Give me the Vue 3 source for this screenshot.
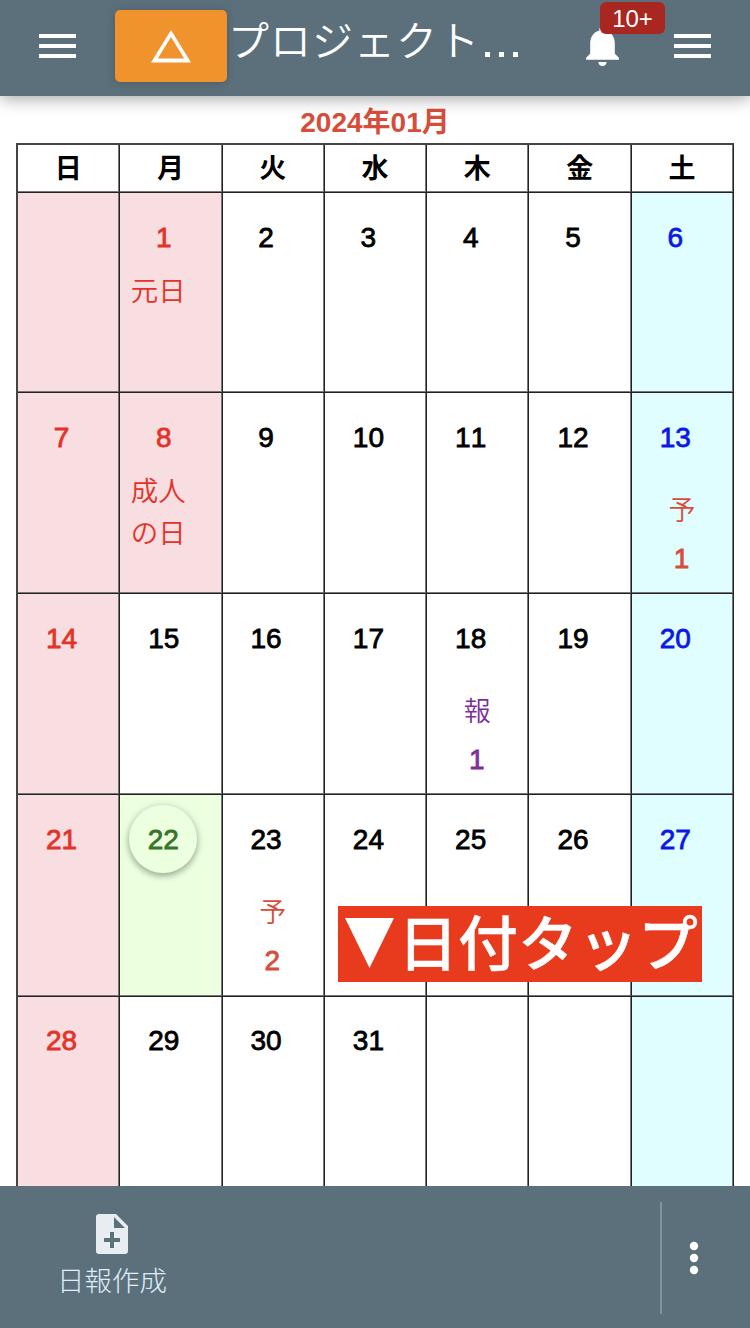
<script setup>
const weekdays = ['日', '月', '火', '水', '木', '金', '土']

const holidays = { 1: ['元日'], 8: ['成人', 'の日'] }
const events = {
  13: { label: '予', count: 1, kind: 'plan' },
  18: { label: '報', count: 1, kind: 'report' },
  23: { label: '予', count: 2, kind: 'plan' },
}
const today = 22

const cells = Array.from({ length: 35 }, (_, i) => {
  const day = i >= 1 && i <= 31 ? i : null
  const column = i % 7
  let tone = ''
  if (day === today) tone = 'today'
  else if (column === 0 || holidays[day]) tone = 'holiday'
  else if (column === 6) tone = 'saturday'
  return { key: i, day, tone, holiday: holidays[day], event: events[day] }
})
</script>

<template>
  <div class="screen">
    <header class="topbar">
      <svg class="menu" viewBox="0 0 37 24"><path d="M0 0h37v4H0zM0 10h37v4H0zM0 20h37v4H0z" /></svg>
      <div class="logo">
        <svg viewBox="0 0 40 33"><path fill-rule="evenodd" d="M20 0 40 32.5H0zM20 7 6.8 28.5h26.4z" /></svg>
      </div>
      <h1 class="title">プロジェクト<span class="dots"><i /><i /><i /></span></h1>
      <div class="notice">
        <svg class="bell" viewBox="4 2.5 16 19.5"><path d="M12 22c1.1 0 2-.9 2-2h-4c0 1.1.9 2 2 2zm6-6v-5c0-3.07-1.64-5.64-4.5-6.32V4c0-.83-.67-1.5-1.5-1.5s-1.5.67-1.5 1.5v.68C7.63 5.36 6 7.92 6 11v5l-2 2v1h16v-1z" /></svg>
        <span class="badge">10+</span>
      </div>
      <svg class="menu menu-right" viewBox="0 0 37 24"><path d="M0 0h37v4H0zM0 10h37v4H0zM0 20h37v4H0z" /></svg>
    </header>

    <main class="content">
      <h2 class="month">2024年01月</h2>
      <div class="calendar">
        <div v-for="name in weekdays" :key="name" class="weekday">{{ name }}</div>
        <div v-for="cell in cells" :key="cell.key" class="cell" :class="cell.tone">
          <div v-if="cell.day" class="day">{{ cell.day }}</div>
          <div v-if="cell.holiday" class="holiday-name">
            <div v-for="line in cell.holiday" :key="line">{{ line }}</div>
          </div>
          <div v-if="cell.event" class="event" :class="cell.event.kind">
            <div class="event-label">{{ cell.event.label }}</div>
            <div class="event-count">{{ cell.event.count }}</div>
          </div>
        </div>
      </div>
      <div class="callout">
        <svg viewBox="0 0 49 50"><path d="M0 0h49L24.5 50z" /></svg>
        <span>日付タップ</span>
      </div>
    </main>

    <footer class="bottombar">
      <div class="create">
        <svg viewBox="4 2 16 20"><path fill-rule="evenodd" d="M14 2H5.5C4.6 2 4 2.6 4 3.5v17c0 .9.6 1.5 1.5 1.5h13c.9 0 1.500-.6 1.500-1.500V8zM16 16h-3v3h-2v-3H8v-2h3v-3h2v3h3zM13 9V3.500L18.500 9z" /></svg>
        <span>日報作成</span>
      </div>
      <div class="more">
        <svg viewBox="0 0 8 32"><circle cx="4" cy="4" r="4.200" /><circle cx="4" cy="16" r="4.200" /><circle cx="4" cy="28" r="4.200" /></svg>
      </div>
    </footer>
  </div>
</template>

<style>
body {
  margin: 0;
}
</style>

<style scoped>
.screen {
  position: relative;
  display: flex;
  flex-direction: column;
  width: 750px;
  height: 1328px;
  overflow: hidden;
  background: #fff;
  font-family: "Liberation Sans", "Noto Sans CJK JP", sans-serif;
  font-kerning: none;
}
svg {
  display: block;
  flex: none;
  fill: #fff;
}
.topbar {
  position: relative;
  z-index: 1;
  flex: none;
  display: flex;
  align-items: flex-start;
  box-sizing: border-box;
  height: 96px;
  background: #5c707c;
  box-shadow: 0 2px 16px rgba(0, 0, 0, 0.38);
}
.menu {
  width: 37px;
  height: 24px;
  margin: 34px 0 0 39px;
}
.logo {
  display: flex;
  justify-content: center;
  width: 112px;
  height: 72px;
  margin: 10px 0 0 39px;
  border-radius: 5px;
  background: #f1932c;
  box-shadow: 0 1px 8px rgba(0, 0, 0, 0.2);
}
.logo svg {
  width: 40px;
  height: 33px;
  margin-top: 20px;
}
.title {
  display: flex;
  width: 361px;
  margin: 8px 0 0 1px;
  color: #fff;
  font: 350 41px/60px "Noto Sans CJK JP", sans-serif;
  letter-spacing: 1px;
  white-space: nowrap;
}
.dots {
  display: flex;
  gap: 9px;
  margin: 44px 0 0 5px;
}
.dots i {
  width: 5px;
  height: 5px;
  background: #fff;
}
.notice {
  position: relative;
  width: 80px;
  margin-left: -3px;
}
.bell {
  width: 33px;
  height: 40px;
  margin: 26px 0 0 0;
}
.badge {
  position: absolute;
  left: 14px;
  top: 2px;
  width: 65px;
  height: 32px;
  border-radius: 6px;
  background: #a82720;
  color: #fff;
  font-size: 24px;
  line-height: 34px;
  text-align: center;
}
.menu-right {
  margin-left: 8px;
}
.content {
  position: relative;
  height: 1090px;
  overflow: hidden;
}
.month {
  margin: 0;
  height: 47px;
  color: #d64d3a;
  font-size: 28px;
  font-weight: 700;
  line-height: 54px;
  text-align: center;
}
.calendar {
  display: grid;
  grid-template-columns: repeat(7, 102.3px);
  grid-template-rows: 48px 200px 201px 201px 202px 201px;
  width: 716px;
  margin-left: 16px;
  border-top: 2px solid #444;
  border-left: 2px solid #444;
}
.weekday,
.cell {
  box-sizing: border-box;
  border-right: 1px solid #222;
  border-bottom: 1px solid #222;
  box-shadow: inset -1px -1px 0 #777;
}
.weekday {
  padding-right: 1px;
  font-size: 27px;
  font-weight: 700;
  line-height: 48px;
  text-align: center;
}
.cell:nth-child(n + 36) {
  padding-top: 9px;
}
.holiday {
  background: #f8dde1;
  color: #e33328;
}
.saturday {
  background: #e0fdff;
  color: #0d18e5;
}
.today {
  background: #ecffdf;
  color: #387429;
}
.day {
  width: 68px;
  height: 68px;
  margin: 10px 0 0 9.5px;
  font-size: 28px;
  line-height: 70px;
  text-align: center;
  -webkit-text-stroke: 0.8px currentColor;
}
.cell:nth-child(n + 36) .day {
  margin-top: 0;
}
.today .day {
  margin-left: 9px;
  border-radius: 50%;
  box-shadow: 0 3px 6px rgba(0, 0, 0, 0.28), 0 1px 10px rgba(0, 0, 0, 0.12);
}
.holiday-name {
  margin-left: 10.5px;
  font-size: 27.5px;
  line-height: 42px;
  font-weight: 350;
}
.event {
  margin: 16px 1px 0 0;
  font-size: 27px;
  font-weight: 350;
  text-align: center;
  line-height: 48px;
}
.event-count {
  padding-right: 1px;
  font-size: 28px;
  -webkit-text-stroke: 0.8px currentColor;
}
.plan {
  color: #d64d3a;
}
.report {
  color: #7d3099;
}
.callout {
  position: absolute;
  left: 338px;
  top: 810px;
  display: flex;
  box-sizing: border-box;
  width: 364px;
  height: 76px;
  padding-left: 7px;
  background: #e83a1c;
  color: #fff;
  font: 500 60px/67px "Noto Sans CJK JP", sans-serif;
  white-space: nowrap;
}
.callout svg {
  width: 49px;
  height: 50px;
  margin: 12px 4px 0 0;
}
.callout span {
  -webkit-text-stroke: 0.4px currentColor;
}
.bottombar {
  flex: none;
  display: flex;
  justify-content: space-between;
  height: 142px;
  background: #5c707c;
}
.create {
  display: flex;
  flex-direction: column;
  align-items: center;
  width: 224px;
  padding-top: 28px;
  color: #deeef8;
  font-size: 27.5px;
  font-weight: 300;
  line-height: 40px;
}
.create svg {
  width: 32px;
  height: 40px;
  margin-bottom: 8px;
  fill: #e8edf2;
}
.more {
  box-sizing: border-box;
  width: 90px;
  height: 112px;
  margin-top: 16px;
  padding: 40px 0 0 28px;
  border-left: 2px solid #7f949e;
}
.more svg {
  width: 8px;
  height: 32px;
  overflow: visible;
}
</style>
